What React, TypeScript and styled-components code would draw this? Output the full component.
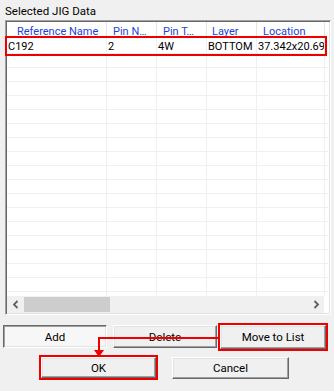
import React from "react";
import styled, { createGlobalStyle } from "styled-components";

const GlobalStyle = createGlobalStyle`
  html, body {
    margin: 0;
    padding: 0;
    background: #f0f0f0;
  }
  body {
    font-family: Roboto, "Noto Sans", "Liberation Sans", sans-serif;
    font-size: 11px;
    color: #000;
  }
`;

const RED = "#ef0000";

const Dialog = styled.div`
  position: relative;
  width: 334px;
  height: 391px;
  background: #f0f0f0;
  display: flex;
  flex-direction: column;
  overflow: hidden;
`;

const Caption = styled.div`
  height: 20px;
  line-height: 22px;
  padding-left: 5px;
  font-size: 11.5px;
`;

const ListBox = styled.div`
  position: relative;
  margin-left: 5px;
  width: 326px;
  height: 295px;
  box-sizing: border-box;
  background: #fff;
  border-top: 1px solid #a0a0a0;
  border-left: 1px solid #a0a0a0;
  border-right: 1px solid #fff;
  border-bottom: 1px solid #fff;
  box-shadow: inset 1px 1px 0 #696969, inset -1px -1px 0 #e3e3e3;
  display: flex;
  flex-direction: column;
  padding: 1px 2px 1px 1px;
`;

const Rows = styled.div`
  flex: 1;
  overflow: hidden;
  display: flex;
  flex-direction: column;
`;

const COLS = "100px 50px 50px 50px 68px 1fr";

const HeaderRow = styled.div`
  display: grid;
  grid-template-columns: ${COLS};
  height: 15px;
  flex: none;
`;

const HeaderCell = styled.div<{ $pad: number }>`
  padding-left: ${(p) => p.$pad}px;
  color: #1f3fd8;
  line-height: 19px;
  white-space: nowrap;
  overflow: hidden;
  border-right: 1px solid #e5e5e5;
  &:last-child {
    border-right: none;
  }
`;

const Row = styled.div<{ $h: number }>`
  display: grid;
  grid-template-columns: ${COLS};
  height: ${(p) => p.$h}px;
  flex: none;
  border-bottom: 1px solid #f0f0f0;
  box-sizing: border-box;
`;

const Cell = styled.div`
  padding-left: 1px;
  line-height: 20px;
  white-space: nowrap;
  overflow: hidden;
  border-right: 1px solid #f0f0f0;
  &:last-child {
    border-right: none;
  }
`;

const HScroll = styled.div`
  height: 17px;
  flex: none;
  display: flex;
  align-items: stretch;
  background: #f0f0f0;
  margin-right: 4px;
`;

const Arrow = styled.div`
  width: 17px;
  display: flex;
  align-items: center;
  justify-content: center;
`;

const Track = styled.div`
  flex: 1;
  display: flex;
  align-items: center;
`;

const Thumb = styled.div`
  width: 86px;
  height: 15px;
  background: #cdcdcd;
`;

const Highlight = styled.div`
  position: absolute;
  left: -1px;
  top: 15px;
  width: 322px;
  height: 20px;
  border: 2px solid ${RED};
  box-sizing: border-box;
  pointer-events: none;
`;

const ButtonRow = styled.div<{ $top: number; $left: number; $gap: number }>`
  display: flex;
  margin-top: ${(p) => p.$top}px;
  padding-left: ${(p) => p.$left}px;
  gap: ${(p) => p.$gap}px;
`;

const Button = styled.button<{
  $w: number;
  $h: number;
  $ml?: number;
  $pressed?: boolean;
  $marked?: boolean;
}>`
  width: ${(p) => p.$w}px;
  height: ${(p) => p.$h}px;
  margin-left: ${(p) => p.$ml ?? 0}px;
  box-sizing: border-box;
  font-family: inherit;
  font-size: 11.5px;
  color: #000;
  padding: 0;
  background: ${(p) => (p.$pressed ? "#f7f7f7" : "#f0f0f0")};
  border-style: solid;
  border-width: 1px;
  border-color: ${(p) =>
    p.$pressed ? "#696969 #fff #fff #696969" : "#fff #696969 #696969 #fff"};
  box-shadow: ${(p) =>
    p.$pressed
      ? "inset 1px 1px 0 #a0a0a0, inset -1px -1px 0 #e3e3e3"
      : "inset -1px -1px 0 #a0a0a0, inset 1px 1px 0 #e3e3e3"};
  outline: ${(p) => (p.$marked ? `2px solid ${RED}` : "none")};
  outline-offset: 0px;
`;

const Overlay = styled.svg`
  position: absolute;
  left: 0;
  top: 0;
  pointer-events: none;
`;

const headers: [string, number][] = [
  ["Reference Name", 10],
  ["Pin N…", 6],
  ["Pin T…", 6],
  ["Layer", 5],
  ["Location", 6],
  ["", 0],
];

const data = ["C192", "2", "4W", "BOTTOM", "37.342x20.69", ""];

export default function App() {
  const empty = Array.from({ length: 18 });
  return (
    <>
      <GlobalStyle />
      <Dialog>
        <Caption>Selected JIG Data</Caption>
        <ListBox>
          <Rows>
            <HeaderRow>
              {headers.map(([t, pad], i) => (
                <HeaderCell key={i} $pad={pad}>
                  {t}
                </HeaderCell>
              ))}
            </HeaderRow>
            <Row $h={17}>
              {data.map((t, i) => (
                <Cell key={i}>{t}</Cell>
              ))}
            </Row>
            {empty.map((_, r) => (
              <Row key={r} $h={14}>
                {data.map((_, i) => (
                  <Cell key={i} />
                ))}
              </Row>
            ))}
          </Rows>
          <HScroll>
            <Arrow>
              <svg width="8" height="9" viewBox="0 0 8 9">
                <path d="M5.5 1 L2 4.5 L5.5 8" fill="none" stroke="#606060" strokeWidth="1.8" />
              </svg>
            </Arrow>
            <Track>
              <Thumb />
            </Track>
            <Arrow>
              <svg width="8" height="9" viewBox="0 0 8 9">
                <path d="M2.5 1 L6 4.5 L2.5 8" fill="none" stroke="#606060" strokeWidth="1.8" />
              </svg>
            </Arrow>
          </HScroll>
          <Highlight />
        </ListBox>
        <ButtonRow $top={10} $left={3} $gap={6}>
          <Button $w={104} $h={23} $pressed>
            Add
          </Button>
          <Button $w={104} $h={23}>
            Delete
          </Button>
          <Button $w={106} $h={24} $ml={-3} $marked>
            Move to List
          </Button>
        </ButtonRow>
        <ButtonRow $top={8} $left={41} $gap={16}>
          <Button $w={115} $h={21} $marked>
            OK
          </Button>
          <Button $w={117} $h={22}>
            Cancel
          </Button>
        </ButtonRow>
        <Overlay width="334" height="391">
          <polyline points="218,338 99,338 99,350" fill="none" stroke={RED} strokeWidth="2" />
          <polygon points="94,350 104,350 99,357" fill={RED} />
        </Overlay>
      </Dialog>
    </>
  );
}
